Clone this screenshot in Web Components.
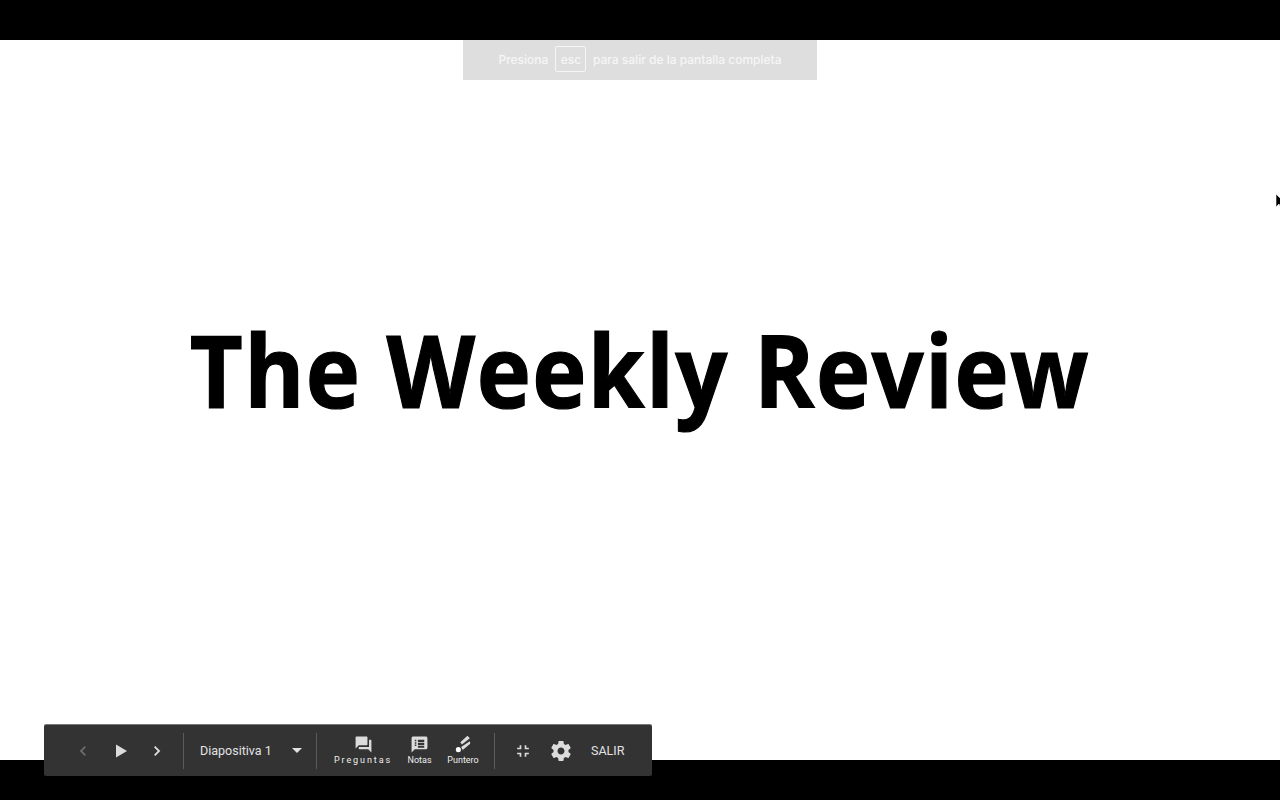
<!DOCTYPE html>
<html lang="es">
<head>
<meta charset="utf-8">
<title>The Weekly Review</title>
<style>
html, body { margin: 0; height: 100%; background: #000; overflow: hidden; }
</style>
</head>
<body>
<slide-stage>
	<esc-notice></esc-notice>
	<slide-title>The Weekly Review</slide-title>
	<mouse-cursor></mouse-cursor>
	<present-bar></present-bar>
</slide-stage>

<script>
class SlideStage extends HTMLElement {
	constructor () {
		super();
		this.attachShadow({ mode: 'open' });
		this.shadowRoot.innerHTML = `
		<style>
		:host { display: block; width: 1280px; height: 800px; padding: 40px 0; box-sizing: border-box; background: #000; position: relative; }
		.page { height: 720px; background: #fff; display: flex; align-items: center; justify-content: center; }
		</style>
		<div class="page"><slot></slot></div>
		`;
	}
}

class SlideTitle extends HTMLElement {
	constructor () {
		super();
		this.attachShadow({ mode: 'open' });
		this.shadowRoot.innerHTML = `
		<style>
		:host { display: block; font: 700 100px/1 "Open Sans", sans-serif; -webkit-text-stroke: 1.2px #000; color: #000; letter-spacing: 1.5px; white-space: nowrap; margin: 0 1px 62px 0; transform: scaleX(.917); }
		</style>
		<slot></slot>
		`;
	}
}

class EscNotice extends HTMLElement {
	constructor () {
		super();
		this.attachShadow({ mode: 'open' });
		this.shadowRoot.innerHTML = `
		<style>
		:host { position: absolute; left: 463px; top: 40px; width: 354px; height: 40px; padding-bottom: 2px; box-sizing: border-box; background: #dedede; color: #f6f6f6; display: flex; align-items: center; justify-content: center; font: 500 12px "Inter", "Liberation Sans", sans-serif; }
		.key { border: 1px solid #f6f6f6; border-radius: 2px; width: 31px; height: 26px; box-sizing: border-box; margin: 0 6.500px 0 7px; display: flex; align-items: center; justify-content: center; }
		</style>
		<span>Presiona</span><span class="key">esc</span><span>para salir de la pantalla completa</span>
		`;
	}
}

class MouseCursor extends HTMLElement {
	constructor () {
		super();
		this.attachShadow({ mode: 'open' });
		this.shadowRoot.innerHTML = `
		<style>
		:host { position: absolute; left: 1276px; top: 194px; width: 4px; height: 15px; overflow: hidden; }
		svg { display: block; }
		</style>
		<svg width="10" height="15" viewBox="0 0 10 15"><path d="M0 0l0 13 3-3 2 4 2-1-2-4h4z" fill="#000" stroke="#fff" stroke-width=".6"/></svg>
		`;
	}
}

class ToolDivider extends HTMLElement {
	constructor () {
		super();
		this.attachShadow({ mode: 'open' });
		this.shadowRoot.innerHTML = `
		<style>
		:host { display: block; width: 1px; height: 36px; background: #5c5c5c; }
		</style>
		`;
	}
}

class ToolButton extends HTMLElement {
	constructor () {
		super();
		let label = this.hasAttribute('label') ? this.getAttribute('label') : '';
		this.attachShadow({ mode: 'open' });
		this.shadowRoot.innerHTML = `
		<style>
		:host { display: flex; flex-direction: column; align-items: center; justify-content: center; color: #dcdcdc; }
		.label { font: 400 9px/11px Roboto, sans-serif; color: #eee; margin-top: 1px; white-space: nowrap; }
		:host([wide]) .label { letter-spacing: 1.9px; font-size: 9px; }
		::slotted(svg) { display: block; fill: currentColor; }
		</style>
		<slot></slot>
		${label ? `<span class="label">${label}</span>` : ''}
		`;
	}
}

class PresentBar extends HTMLElement {
	constructor () {
		super();
		this.attachShadow({ mode: 'open' });
		this.shadowRoot.innerHTML = `
		<style>
		:host { position: absolute; left: 44px; top: 725px; width: 608px; height: 51px; background: #333; border-radius: 2px; display: flex; align-items: center; color: #e2e2e2; font: 400 12.5px Roboto, sans-serif; box-shadow: 0 -1px 0 #777; }
		svg { display: block; fill: currentColor; }
		.nav { width: 37px; }
		.first { margin-left: 20px; }
		.off { color: #6a6a6a; }
		.slide { margin-left: 16px; width: 72px; white-space: nowrap; }
		.caret { margin-left: 20px; margin-right: 14px; }
		.exit { margin-left: 18px; }
		.gear { margin-left: 16px; }
		.leave { margin-left: 18px; font-size: 12.5px; }
		</style>
		<tool-button class="nav first off"><svg width="18" height="18" viewBox="0 0 18 18"><path d="M12 5.300L10.700 4 5.700 9l5 5 1.300-1.300L8.300 9z"/></svg></tool-button>
		<tool-button class="nav" style="padding-left:2px;width:35px"><svg width="20" height="20" viewBox="0 0 20 20"><path d="M5 3.500v13L16 10z"/></svg></tool-button>
		<tool-button class="nav"><svg width="18" height="18" viewBox="0 0 18 18"><path d="M6 5.300L7.300 4l5 5-5 5L6 12.700 9.700 9z"/></svg></tool-button>
		<tool-divider style="margin-left:8px"></tool-divider>
		<span class="slide">Diapositiva 1</span>
		<svg class="caret" width="10" height="5" viewBox="0 0 10 5"><path d="M0 0h10L5 5z"/></svg>
		<tool-divider></tool-divider>
		<tool-button wide label="Preguntas" style="margin-left:18px;width:56px"><svg width="19" height="19" viewBox="0 0 24 24"><path d="M21 6h-2v9H6v2c0 .55.45 1 1 1h11l4 4V7c0-.55-.45-1-1-1zm-4 6V3c0-.55-.45-1-1-1H3c-.55 0-1 .45-1 1v14l4-4h10c.55 0 1-.45 1-1z"/></svg></tool-button>
		<tool-button label="Notas" style="margin-left:16.500px;width:24px"><svg width="19" height="19" viewBox="0 0 24 24"><path d="M20 2H4c-1.100 0-1.990.9-1.990 2L2 22l4-4h14c1.100 0 2-.9 2-2V4c0-1.100-.9-2-2-2zM8 14H6v-2h2v2zm0-3H6V9h2v2zm0-3H6V6h2v2zm10 8h-8v-2h8v2zm0-3h-8V9h8v2zm0-3h-8V6h8v2z"/></svg></tool-button>
		<tool-button label="Puntero" style="margin-left:15.500px;width:32px"><svg width="19" height="19" viewBox="0 0 24 24"><path d="M17 1l3 3-10 8-2-3zM20 8l.5 3L11 19l-2-4z"/><circle cx="5.500" cy="18.500" r="3.200" fill="#fff"/></svg></tool-button>
		<tool-divider style="margin-left:15px"></tool-divider>
		<tool-button class="exit"><svg width="20" height="20" viewBox="0 0 24 24"><path d="M5 16h3v3h2v-5H5v2zm3-8H5v2h5V5H8v3zm6 11h2v-3h3v-2h-5v5zm2-11V5h-2v5h5V8h-3z"/></svg></tool-button>
		<tool-button class="gear"><svg width="24" height="24" viewBox="0 0 24 24"><path d="M19.430 12.980c.04-.32.07-.64.07-.98s-.03-.66-.07-.98l2.110-1.650c.19-.15.24-.42.12-.64l-2-3.460c-.12-.22-.39-.3-.61-.22l-2.490 1c-.52-.4-1.080-.73-1.690-.98l-.38-2.650C14.460 2.180 14.250 2 14 2h-4c-.25 0-.46.18-.49.42l-.38 2.650c-.61.25-1.170.59-1.690.98l-2.490-1c-.23-.09-.49 0-.61.22l-2 3.460c-.13.22-.07.49.12.64l2.110 1.650c-.04.32-.07.65-.07.98s.03.66.07.98l-2.110 1.650c-.19.15-.24.42-.12.64l2 3.460c.12.22.39.3.61.22l2.490-1c.52.4 1.080.73 1.690.98l.38 2.650c.03.24.24.42.49.42h4c.25 0 .46-.18.49-.42l.38-2.650c.61-.25 1.170-.59 1.690-.98l2.490 1c.23.09.49 0 .61-.22l2-3.460c.12-.22.07-.49-.12-.64l-2.110-1.650zM12 15.500c-1.930 0-3.500-1.570-3.500-3.500s1.570-3.500 3.500-3.500 3.500 1.570 3.500 3.500-1.570 3.500-3.500 3.500z"/></svg></tool-button>
		<span class="leave">SALIR</span>
		`;
	}
}

customElements.define('slide-stage', SlideStage);
customElements.define('slide-title', SlideTitle);
customElements.define('esc-notice', EscNotice);
customElements.define('mouse-cursor', MouseCursor);
customElements.define('tool-divider', ToolDivider);
customElements.define('tool-button', ToolButton);
customElements.define('present-bar', PresentBar);
</script>
</body>
</html>
